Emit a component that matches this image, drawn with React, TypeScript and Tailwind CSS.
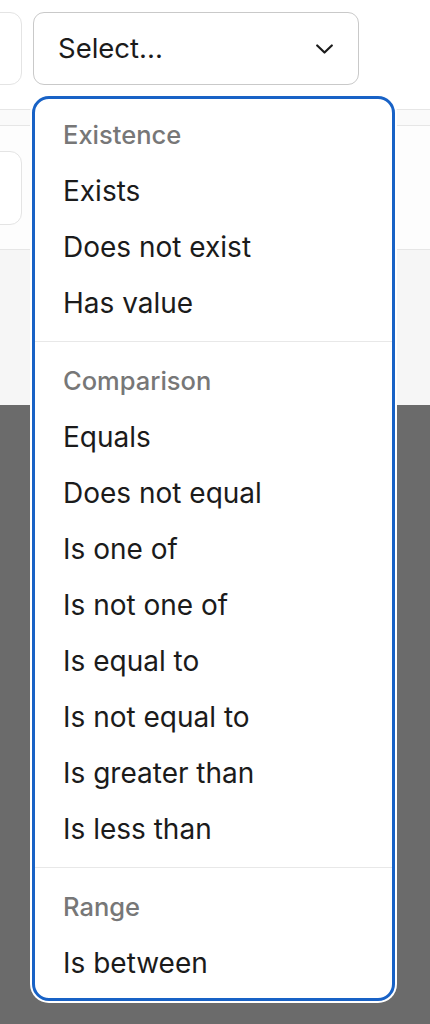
import React from "react";

const groups: { title: string; items: string[] }[] = [
  { title: "Existence", items: ["Exists", "Does not exist", "Has value"] },
  {
    title: "Comparison",
    items: [
      "Equals",
      "Does not equal",
      "Is one of",
      "Is not one of",
      "Is equal to",
      "Is not equal to",
      "Is greater than",
      "Is less than",
    ],
  },
  { title: "Range", items: ["Is between"] },
];

export default function App() {
  return (
    <div
      className="relative w-[430px] h-[1024px] overflow-hidden flex flex-col bg-white"
      style={{ fontFamily: "Inter, 'Noto Sans', 'Liberation Sans', sans-serif" }}
    >
      {/* top bar */}
      <div className="h-[109px] shrink-0 bg-white pt-[12px] flex gap-[11px]">
        <div className="-ml-[20px] w-[42px] h-[73px] rounded-[12px] border border-[#e4e4e4] bg-white" />
        <div className="w-[326px] h-[73px] rounded-[11px] border border-[#c9c9c9] bg-white flex items-center justify-between pl-[24px] pr-[25px]">
          <span className="text-[27.5px] text-[#1b1b1b] leading-none">Select...</span>
          <svg width="17" height="10" viewBox="0 0 17 10" fill="none">
            <polyline
              points="1.2,1.5 8.5,8.5 15.8,1.5"
              stroke="#1b1b1b"
              strokeWidth="2.2"
              strokeLinecap="round"
              strokeLinejoin="round"
            />
          </svg>
        </div>
      </div>
      <div className="h-[17px] shrink-0 border-t border-b border-[#e6e6e6] bg-[#fafafa]" />
      <div className="h-[123px] shrink-0 bg-[#fdfdfd] pt-[25px] flex">
        <div className="-ml-[20px] w-[42px] h-[74px] rounded-[12px] border border-[#e4e4e4] bg-white" />
      </div>
      <div className="h-[156px] shrink-0 border-t border-[#e6e6e6] bg-[#f6f6f6]" />
      <div className="flex-1 bg-[#6b6b6b]" />

      {/* dropdown menu */}
      <div className="absolute left-[32px] top-[96px] w-[363px] h-[905px] rounded-[17px] border-[3px] border-[#1862c6] bg-white shadow-[0_0_0_2px_#ffffff] pt-[8px]">
        {groups.map((g, gi) => (
          <div key={g.title}>
            {gi > 0 && (
              <div className="mt-[10px] mb-[11px] h-px bg-[#e8e8e8]" />
            )}
            <div className="h-[56px] flex items-center pl-[28px] text-[25.5px] font-medium text-[#777777]">
              {g.title}
            </div>
            {g.items.map((it) => (
              <div
                key={it}
                className="h-[56px] flex items-center pl-[28px] text-[28px] text-[#1b1b1b]"
              >
                {it}
              </div>
            ))}
          </div>
        ))}
      </div>
    </div>
  );
}
